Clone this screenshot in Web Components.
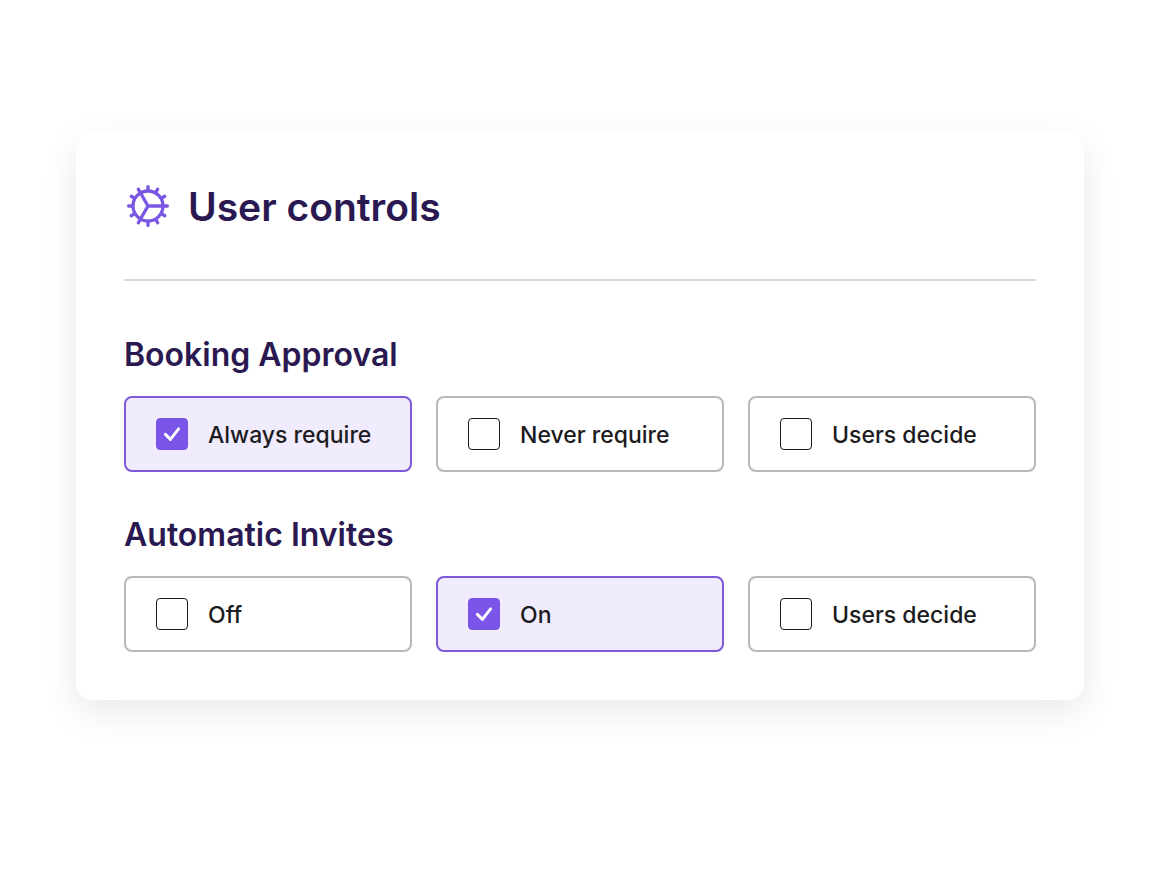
<!DOCTYPE html>
<html lang="en">
<head>
<meta charset="utf-8">
<meta name="viewport" content="width=device-width, initial-scale=1">
<title>User controls</title>
<style>
body { margin: 0; background: #fff; font-family: Inter, "Liberation Sans", sans-serif; color: #1c1b20; }
main { padding: 132px 76px; }
@media (max-width: 800px) { main { padding: 24px; } }
</style>
</head>
<body>
<main>
  <settings-card>
    <gear-icon slot="icon"></gear-icon>
    <span slot="title">User controls</span>
    <option-group label="Booking Approval">
      <check-option label="Always require" checked></check-option>
      <check-option label="Never require"></check-option>
      <check-option label="Users decide"></check-option>
    </option-group>
    <option-group label="Automatic Invites">
      <check-option label="Off"></check-option>
      <check-option label="On" checked></check-option>
      <check-option label="Users decide"></check-option>
    </option-group>
  </settings-card>
</main>
<script>
class SettingsCard extends HTMLElement {
  constructor() {
    super();
    this.attachShadow({ mode: 'open' }).innerHTML = `
      <style>
        :host { display: block; padding: 48px; border-radius: 16px; background: #fff;
          box-shadow: 0 12px 36px rgba(0, 0, 0, .09); }
        header { display: flex; align-items: center; gap: 16px; padding-bottom: 47px; border-bottom: 2px solid #dadada; }
        h1 { margin: 0; padding-top: 2px; font-size: 39px; line-height: 50px; font-weight: 600; color: #2a1850; }
        .body { display: flex; flex-direction: column; gap: 40px; padding-top: 51px; }
      </style>
      <header><slot name="icon"></slot><h1><slot name="title"></slot></h1></header>
      <div class="body"><slot></slot></div>`;
  }
}

class GearIcon extends HTMLElement {
  constructor() {
    super();
    let teeth = '';
    for (let a = 0; a < 360; a += 30) {
      teeth += `<path d="M24 8V4.6" transform="rotate(${a} 24 24)"/>`;
    }
    this.attachShadow({ mode: 'open' }).innerHTML = `
      <style>
        :host { display: block; flex: none; width: 48px; height: 48px; }
        svg { display: block; }
      </style>
      <svg width="48" height="48" viewBox="0 0 48 48" fill="none" stroke="#7a57e3" stroke-width="3.3" stroke-linecap="round" aria-hidden="true">
        <circle cx="24" cy="24" r="15"/>
        <path d="M24 24h15M24 24l-7.5-13M24 24l-7.5 13"/>${teeth}
      </svg>`;
  }
}

class OptionGroup extends HTMLElement {
  connectedCallback() {
    if (this.shadowRoot) return;
    this.attachShadow({ mode: 'open' }).innerHTML = `
      <style>
        :host { display: block; }
        h2 { margin: 0 0 20px; padding-top: 2px; font-size: 32px; line-height: 42px; font-weight: 600; color: #2a1850; }
        .row { display: grid; grid-template-columns: repeat(3, minmax(0, 1fr)); gap: 24px; }
        @media (max-width: 960px) { .row { grid-template-columns: minmax(0, 1fr); } }
      </style>
      <section aria-labelledby="name">
        <h2 id="name"></h2>
        <div class="row"><slot></slot></div>
      </section>`;
    this.shadowRoot.querySelector('h2').textContent = this.getAttribute('label');
  }
}

class CheckOption extends HTMLElement {
  connectedCallback() {
    if (this.shadowRoot) return;
    this.attachShadow({ mode: 'open' }).innerHTML = `
      <style>
        :host { display: block; }
        label { box-sizing: border-box; display: flex; align-items: center; gap: 20px; min-height: 76px;
          padding: 0 30px; border: 2px solid #b8b8b8; border-radius: 8px; background: #fff;
          font-size: 23px; line-height: 32px; font-weight: 500; cursor: pointer; }
        label:has(input:checked) { border-color: #7f57d8; background: #f1ebfe; }
        .box { display: grid; flex: none; width: 32px; height: 32px; }
        .text { padding-top: 2px; }
        input, svg { grid-area: 1 / 1; }
        input { appearance: none; box-sizing: border-box; width: 32px; height: 32px; margin: 0;
          border: 1px solid #1c1b20; border-radius: 4px; background: #fff; cursor: pointer; }
        input:checked { border-color: #7b55e8; background: #7b55e8; }
        svg { z-index: 1; visibility: hidden; pointer-events: none; }
        input:checked + svg { visibility: visible; }
      </style>
      <label>
        <span class="box">
          <input type="checkbox">
          <svg width="32" height="32" viewBox="0 0 32 32" fill="none" stroke="#fff" stroke-width="2.9" stroke-linecap="round" stroke-linejoin="round" aria-hidden="true"><path d="M9.4 16.4l5 5L22.6 10.9"/></svg>
        </span>
        <span class="text"></span>
      </label>`;
    this.shadowRoot.querySelector('.text').textContent = this.getAttribute('label');
    this.shadowRoot.querySelector('input').checked = this.hasAttribute('checked');
  }
}

customElements.define('settings-card', SettingsCard);
customElements.define('gear-icon', GearIcon);
customElements.define('option-group', OptionGroup);
customElements.define('check-option', CheckOption);
</script>
</body>
</html>
